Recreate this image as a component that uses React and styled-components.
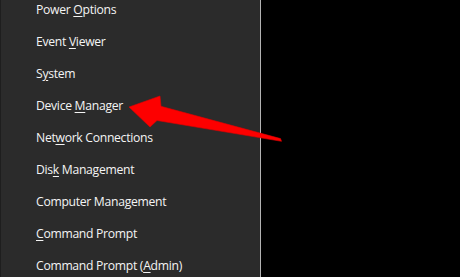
import React from "react";
import styled, { createGlobalStyle } from "styled-components";

const Global = createGlobalStyle`
  html, body { margin: 0; padding: 0; background: #000; }
  body { width: 460px; height: 277px; overflow: hidden; }
`;

const Screen = styled.div`
  position: relative;
  width: 460px;
  height: 277px;
  background: #000;
  display: flex;
  overflow: hidden;
`;

const Menu = styled.nav`
  width: 259px;
  height: 100%;
  background: #2b2b2b;
  border-left: 1px solid #1e1e1e;
  border-right: 1px solid #b3b3b3;
  display: flex;
  flex-direction: column;
  overflow: hidden;
`;

const List = styled.ul`
  list-style: none;
  margin: -6px 0 0 0;
  padding: 0;
  display: flex;
  flex-direction: column;
`;

const Item = styled.li`
  height: 32px;
  line-height: 32px;
  padding-left: 35px;
  color: #f4f4f4;
  font-family: "Open Sans", "Noto Sans", sans-serif;
  font-size: 12.2px;
  letter-spacing: -0.3px;
  white-space: nowrap;
`;

const Key = styled.span`
  text-decoration: underline;
  text-decoration-thickness: 1px;
  text-underline-offset: 2px;
`;

const ArrowLayer = styled.svg`
  position: absolute;
  left: 0;
  top: 0;
  pointer-events: none;
`;

const items = [
  ["Power ", "O", "ptions"],
  ["Event ", "V", "iewer"],
  ["S", "y", "stem"],
  ["Device ", "M", "anager"],
  ["Net", "w", "ork Connections"],
  ["Dis", "k", " Management"],
  ["Computer Mana", "g", "ement"],
  ["", "C", "ommand Prompt"],
  ["Command Prompt (", "A", "dmin)"],
];

export default function App() {
  return (
    <>
      <Global />
      <Screen>
        <Menu>
          <List>
            {items.map(([a, k, b]) => (
              <Item key={a + k + b}>
                {a}
                <Key>{k}</Key>
                {b}
              </Item>
            ))}
          </List>
        </Menu>
        <ArrowLayer width="460" height="277" viewBox="0 0 460 277">
          <polygon
            points="129,107 160,96 161,106.3 280.5,138.6 281.5,141.3 157,120.5 150,127"
            fill="#fd0000"
            stroke="#e00000"
            strokeWidth="0.6"
            strokeLinejoin="round"
          />
        </ArrowLayer>
      </Screen>
    </>
  );
}
